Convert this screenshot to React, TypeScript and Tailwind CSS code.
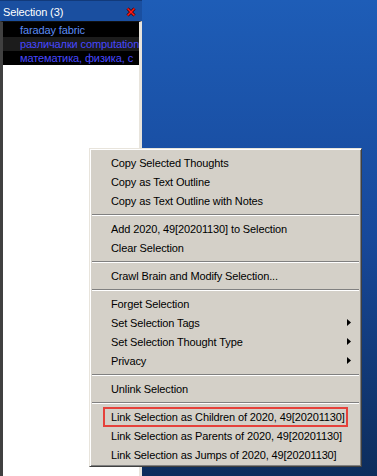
import React from "react";

type Item = { t: "item"; label: string; arrow?: boolean; boxed?: boolean } | { t: "sep" };

const items: Item[] = [
  { t: "item", label: "Copy Selected Thoughts" },
  { t: "item", label: "Copy as Text Outline" },
  { t: "item", label: "Copy as Text Outline with Notes" },
  { t: "sep" },
  { t: "item", label: "Add 2020, 49[20201130] to Selection" },
  { t: "item", label: "Clear Selection" },
  { t: "sep" },
  { t: "item", label: "Crawl Brain and Modify Selection..." },
  { t: "sep" },
  { t: "item", label: "Forget Selection" },
  { t: "item", label: "Set Selection Tags", arrow: true },
  { t: "item", label: "Set Selection Thought Type", arrow: true },
  { t: "item", label: "Privacy", arrow: true },
  { t: "sep" },
  { t: "item", label: "Unlink Selection" },
  { t: "sep" },
  { t: "item", label: "Link Selection as Children of 2020, 49[20201130]", boxed: true },
  { t: "item", label: "Link Selection as Parents of 2020, 49[20201130]" },
  { t: "item", label: "Link Selection as Jumps of 2020, 49[20201130]" },
];

export default function App() {
  return (
    <div
      className="relative w-[377px] h-[476px] overflow-hidden flex bg-gradient-to-b from-[#1e5db7] via-[#17489a] to-[#0d2d5c] text-[11px] leading-none tracking-[-0.12px]"
      style={{ fontFamily: '"Liberation Sans", Arial, sans-serif' }}
    >
      {/* Left panel */}
      <div className="w-[142px] h-full flex flex-col">
        <div className="h-[21px] flex items-center justify-between pl-[3px] pr-[6px] pt-[2px] bg-[#1a4fa0] border-t border-[#123a7a] text-white text-[11px]">
          <span>Selection (3)</span>
          <svg width="10" height="10" viewBox="0 0 10 10" className="mt-[-1px]">
            <path d="M1.5 1.5 L8.5 8.5 M8.5 1.5 L1.5 8.5" stroke="#3a0000" strokeWidth="3" />
            <path d="M1.5 1.5 L8.5 8.5 M8.5 1.5 L1.5 8.5" stroke="#ff1a1a" strokeWidth="1.6" />
          </svg>
        </div>
        <div className="flex-1 flex flex-col bg-white border-l-[3px] border-l-[#404040] border-r-[3px] border-r-[#e8e4dc] border-t border-t-[#101010]">
          <div className="h-[15px] bg-black text-[#5b8cf5] pl-[17px] pt-[1px] flex items-center whitespace-nowrap overflow-hidden">
            faraday fabric
          </div>
          <div className="h-[14px] bg-[#1c1c1c] text-[#4747ff] pl-[17px] pt-[1px] flex items-center whitespace-nowrap overflow-hidden">
            различалки computation
          </div>
          <div className="h-[14px] bg-black text-[#4747ff] pl-[17px] pt-[1px] flex items-center whitespace-nowrap overflow-hidden">
            математика, физика, с
          </div>
        </div>
      </div>
      <div className="flex-1" />

      {/* Context menu */}
      <div className="absolute left-[89px] top-[148px] w-[273px] h-[319px] bg-[#d4d0c8] border border-t-[#e8e4dc] border-l-[#e8e4dc] border-r-[#404040] border-b-[#404040] shadow-[inset_1px_1px_0_#ffffff,inset_-1px_-1px_0_#808080] pt-[4px] pb-[1px] px-[2px] text-black">
        {items.map((it, i) =>
          it.t === "sep" ? (
            <div key={i} className="h-[9px] flex flex-col justify-center">
              <div className="h-px bg-[#808080]" />
              <div className="h-px bg-white" />
            </div>
          ) : (
            <div key={i} className="relative h-[19px] flex items-center pl-[19px] pt-[1px] whitespace-nowrap">
              <span>{it.label}</span>
              {it.arrow && (
                <svg width="4" height="7" viewBox="0 0 4 7" className="absolute right-[8px] top-[6px]">
                  <path d="M0 0 L4 3.5 L0 7 Z" fill="#000" />
                </svg>
              )}
              {it.boxed && (
                <div className="absolute left-[11px] w-[245px] top-0 h-[20px] border-2 border-[#e5413b]" />
              )}
            </div>
          )
        )}
      </div>
    </div>
  );
}
